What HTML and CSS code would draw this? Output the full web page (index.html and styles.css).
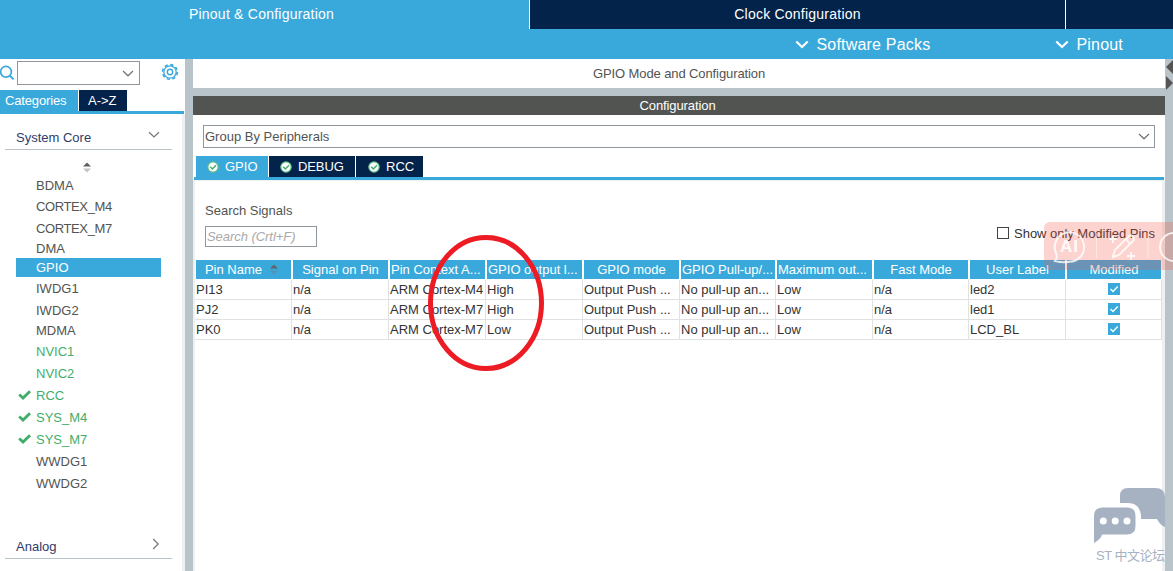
FILE: index.html
```html
<!DOCTYPE html>
<html lang="en">
<head>
    <meta charset="UTF-8">
    <meta name="viewport" content="width=device-width, initial-scale=1.0">
    <title>Pinout &amp; Configuration</title>
    <link rel="stylesheet" href="styles.css">
</head>
<body>
    <header>
        <div class="main-tabs">
            <div class="main-tab active">Pinout &amp; Configuration</div>
            <div class="main-tab clock">Clock Configuration</div>
            <div class="main-tab rest"></div>
        </div>
        <div class="sub-menu">
            <div class="menu-item packs">
                <svg width="14" height="9" viewBox="0 0 14 9"><path d="M1.3 1.5 L7 7 L12.7 1.5" fill="none" stroke="#fff" stroke-width="2.2"/></svg>
                <span>Software Packs</span>
            </div>
            <div class="menu-item">
                <svg width="14" height="9" viewBox="0 0 14 9"><path d="M1.3 1.5 L7 7 L12.7 1.5" fill="none" stroke="#fff" stroke-width="2.2"/></svg>
                <span>Pinout</span>
            </div>
        </div>
    </header>

    <div class="content">
        <!-- Categories -->
        <aside class="sidebar">
            <div class="search-row">
                <svg class="search-icon" width="15" height="16" viewBox="0 0 15 16"><circle cx="6" cy="6.8" r="5.4" fill="none" stroke="#39a9dc" stroke-width="1.7"/><path d="M9.8 10.6 L13.6 14.4" stroke="#39a9dc" stroke-width="2"/></svg>
                <div class="combo">
                    <svg width="12" height="7" viewBox="0 0 12 7"><path d="M1 1 L6 5.8 L11 1" fill="none" stroke="#6e7478" stroke-width="1.2"/></svg>
                </div>
                <svg class="gear" width="18" height="18" viewBox="0 0 18 18" fill="none" stroke="#39a9dc">
                    <circle cx="9" cy="9" r="7.4" stroke-width="1.6" stroke-dasharray="3.3 2.512"/>
                    <circle cx="9" cy="9" r="6.2" stroke-width="1.3"/>
                    <circle cx="9" cy="9" r="2.7" stroke-width="1.4"/>
                </svg>
            </div>
            <div class="side-tabs">
                <div class="side-tab active">Categories</div>
                <div class="side-tab az">A-&gt;Z</div>
            </div>
            <div class="side-panel">
                <div class="group">
                    <span>System Core</span>
                    <svg width="12" height="8" viewBox="0 0 12 8"><path d="M1 1.2 L6 6 L11 1.2" fill="none" stroke="#777" stroke-width="1.2"/></svg>
                </div>
                <svg class="sort" width="10" height="11" viewBox="0 0 10 11"><path d="M1 4.5 L5 .5 L9 4.5Z" fill="#5f5f5f"/><path d="M1 6.5 L5 10.5 L9 6.5Z" fill="#c4c4c4"/></svg>
                <ul class="list">
                    <li>BDMA</li>
                    <li class="mid tight">CORTEX_M4</li>
                    <li class="tight">CORTEX_M7</li>
                    <li class="short">DMA</li>
                    <li class="short selected">GPIO</li>
                    <li>IWDG1</li>
                    <li>IWDG2</li>
                    <li class="short">MDMA</li>
                    <li class="green">NVIC1</li>
                    <li class="green">NVIC2</li>
                    <li class="green checked"><svg width="13" height="10" viewBox="0 0 13 10"><path d="M1.2 4.5 L5 8 L12 1.2" fill="none" stroke="#3fae6a" stroke-width="2.8"/></svg>RCC</li>
                    <li class="green checked"><svg width="13" height="10" viewBox="0 0 13 10"><path d="M1.2 4.5 L5 8 L12 1.2" fill="none" stroke="#3fae6a" stroke-width="2.8"/></svg>SYS_M4</li>
                    <li class="green checked"><svg width="13" height="10" viewBox="0 0 13 10"><path d="M1.2 4.5 L5 8 L12 1.2" fill="none" stroke="#3fae6a" stroke-width="2.8"/></svg>SYS_M7</li>
                    <li>WWDG1</li>
                    <li>WWDG2</li>
                </ul>
                <div class="group analog">
                    <span>Analog</span>
                    <svg width="8" height="12" viewBox="0 0 8 12"><path d="M1.2 1 L6.2 6 L1.2 11" fill="none" stroke="#777" stroke-width="1.2"/></svg>
                </div>
            </div>
        </aside>

        <!-- Mode and configuration -->
        <main>
            <div class="title">GPIO Mode and Configuration</div>
            <div class="config-bar">Configuration</div>
            <div class="config">
                <div class="group-by">
                    <span>Group By Peripherals</span>
                    <svg width="12" height="7" viewBox="0 0 12 7"><path d="M1 1 L6 5.8 L11 1" fill="none" stroke="#6e7478" stroke-width="1.2"/></svg>
                </div>
                <div class="tabs">
                    <div class="tab active"><svg width="12" height="12" viewBox="0 0 12 12"><circle cx="6" cy="6" r="5.2" fill="#fff" stroke="#5dbb83" stroke-width="1.2"/><path d="M3.2 5.8 L5.4 8 L9 4.2" fill="none" stroke="#3fae6a" stroke-width="1.4"/></svg>GPIO</div>
                    <div class="tab debug"><svg width="12" height="12" viewBox="0 0 12 12"><circle cx="6" cy="6" r="5.2" fill="#fff" stroke="#5dbb83" stroke-width="1.2"/><path d="M3.2 5.8 L5.4 8 L9 4.2" fill="none" stroke="#3fae6a" stroke-width="1.4"/></svg>DEBUG</div>
                    <div class="tab rcc"><svg width="12" height="12" viewBox="0 0 12 12"><circle cx="6" cy="6" r="5.2" fill="#fff" stroke="#5dbb83" stroke-width="1.2"/><path d="M3.2 5.8 L5.4 8 L9 4.2" fill="none" stroke="#3fae6a" stroke-width="1.4"/></svg>RCC</div>
                </div>
                <div class="tab-body">
                    <div class="search-label">Search Signals</div>
                    <div class="filter">
                        <div class="search-box">Search (Crtl+F)</div>
                        <div class="only-modified"><span class="box"></span>Show only Modified Pins</div>
                    </div>
                    <table>
                        <colgroup>
                            <col class="w97"><col class="w97"><col class="w97"><col class="w97"><col class="w97">
                            <col class="w96"><col class="w97"><col class="w96"><col class="w97"><col class="w96">
                        </colgroup>
                        <thead>
                            <tr>
                                <th><div class="sorted">Pin Name <svg width="10" height="11" viewBox="0 0 10 11"><path d="M1 4.5 L5 .5 L9 4.5Z" fill="#5f6468"/><path d="M1 6.5 L5 10.5 L9 6.5Z" fill="#5591b4"/></svg></div></th>
                                <th><div>Signal on Pin</div></th>
                                <th><div class="left">Pin Context A...</div></th>
                                <th><div class="left">GPIO output l...</div></th>
                                <th><div>GPIO mode</div></th>
                                <th><div class="left">GPIO Pull-up/...</div></th>
                                <th><div class="left">Maximum out...</div></th>
                                <th><div>Fast Mode</div></th>
                                <th><div>User Label</div></th>
                                <th><div>Modified</div></th>
                            </tr>
                        </thead>
                        <tbody id="pins"></tbody>
                    </table>
                </div>
                <!-- forum watermark -->
                <div class="watermark">
                    <svg width="71" height="56" viewBox="0 0 71 56" fill="#a6b2c2">
                        <path d="M26 15 V8 Q26 0 34 0 H61 Q71 0 71 9 V39 Q65 36 63 31 H47 V28 Q46 15 34 15 Z"/>
                        <path d="M9 19.500 H33 Q41.500 19.500 41.500 28 V38 Q41.500 46.500 33 46.500 H8 Q7 51 0 55 V28 Q0 19.500 9 19.500Z"/>
                        <g fill="#fff"><circle cx="9.300" cy="33" r="3.500"/><circle cx="21.200" cy="33" r="3.500"/><circle cx="33" cy="33" r="3.500"/></g>
                    </svg>
                    <span>ST 中文论坛</span>
                </div>
            </div>
        </main>

        <div class="rail">
            <svg width="8" height="32" viewBox="0 0 8 32" fill="#555"><path d="M8 1 V15 L1 8Z"/><path d="M1 17 V31 L8 24Z"/></svg>
        </div>
    </div>

    <!-- floating AI toolbar -->
    <div class="ai-bar">
        <svg width="129" height="48" viewBox="0 0 129 48" fill="none" stroke="#fff" stroke-opacity=".8" stroke-width="2">
            <path d="M12.500 32 A14.700 14.700 0 1 1 25 39.700 Q19 41 11 39 Q13.500 36 12.500 32"/>
            <path d="M52.500 11 V36 M104 11 V36" stroke-width="1" stroke-opacity=".5"/>
            <path d="M69 34 L71 28 L85 14 Q87 12.500 89 14.500 Q91 17 89 19 L75 33 L69 35Z M82 17 L86 22"/>
            <path d="M69 13 V21 M65 17 H73 M87 30 V38 M83 34 H91"/>
            <circle cx="130" cy="25" r="14"/>
        </svg>
        <span>AI</span>
    </div>
    <svg class="marker" width="120" height="140" viewBox="0 0 120 140"><ellipse cx="60" cy="69" rx="55.500" ry="65.500" fill="none" stroke="#ed1c24" stroke-width="5"/></svg>

    <script>
        const pins = [
            { name: 'PI13', context: 'ARM Cortex-M4', level: 'High', label: 'led2' },
            { name: 'PJ2', context: 'ARM Cortex-M7', level: 'High', label: 'led1' },
            { name: 'PK0', context: 'ARM Cortex-M7', level: 'Low', label: 'LCD_BL' }
        ];

        document.getElementById('pins').innerHTML = pins.map(pin => `
            <tr>
                <td>${pin.name}</td>
                <td>n/a</td>
                <td>${pin.context}</td>
                <td>${pin.level}</td>
                <td>Output Push ...</td>
                <td>No pull-up an...</td>
                <td>Low</td>
                <td>n/a</td>
                <td>${pin.label}</td>
                <td class="check"><svg width="12" height="12" viewBox="0 0 12 12"><rect width="12" height="12" fill="#39a9dc"/><path d="M2.5 6 L5 8.500 L9.700 3.500" fill="none" stroke="#fff" stroke-width="1.3"/></svg></td>
            </tr>
        `).join('');
    </script>
</body>
</html>
```
FILE: styles.css
```css
* {
    box-sizing: border-box;
}
body {
    font-family: "Liberation Sans", Arial, sans-serif;
    font-size: 13px;
    margin: 0;
    height: 571px;
    overflow: hidden;
    position: relative;
    background: #fff;
    color: #525452;
}
svg {
    display: block;
    flex: none;
}
header {
    height: 59px;
    background: #39a9dc;
    color: #fff;
}
.main-tabs {
    display: flex;
    height: 29px;
    font-size: 14px;
    line-height: 28px;
    letter-spacing: 0.23px;
    text-align: center;
}
.main-tab.active {
    width: 529px;
    padding-right: 6px;
}
.main-tab.clock {
    width: 536px;
    background: #03234b;
    border-left: 1px solid #fff;
}
.main-tab.rest {
    flex: 1;
    background: #03234b;
    border-left: 1px solid #fff;
}
.sub-menu {
    display: flex;
    justify-content: flex-end;
    height: 30px;
    padding: 1px 50px 0 0;
    font-size: 16px;
    letter-spacing: 0.2px;
}
.menu-item {
    display: flex;
    align-items: center;
    gap: 7px;
}
.menu-item.packs {
    margin-right: 125px;
}
.content {
    display: flex;
    height: 512px;
}

/* sidebar */
.sidebar {
    width: 185px;
}
.search-row {
    display: flex;
    height: 31px;
    padding-top: 2px;
}
.search-icon {
    margin-top: 4px;
}
.combo {
    display: flex;
    align-items: center;
    justify-content: flex-end;
    width: 123px;
    height: 24px;
    margin-left: 2px;
    padding-right: 5px;
    border: 1px solid #8f979c;
}
.gear {
    margin: 2px 0 0 21px;
}
.side-tabs {
    display: flex;
    gap: 1px;
    width: 184px;
    height: 24px;
    border-bottom: 3px solid #39a9dc;
    color: #fff;
    line-height: 21px;
}
.side-tab.active {
    width: 78px;
    padding-left: 5px;
    background: #39a9dc;
    letter-spacing: -0.15px;
}
.side-tab.az {
    width: 48px;
    padding-left: 9px;
    background: #03234b;
}
.side-panel {
    height: 457px;
    padding-left: 5px;
    border-right: 3px solid #eef0f1;
}
.group {
    display: flex;
    justify-content: space-between;
    align-items: center;
    width: 167px;
    height: 36px;
    padding: 12px 12px 0 11px;
    border-bottom: 1px solid #b8c4ca;
    color: #2f3b6b;
}
.group svg {
    margin-top: -5px;
}
.sort {
    margin: 12px 0 0 77px;
}
.list {
    list-style: none;
    margin: 1px 0 0 11px;
    padding: 0;
    width: 145px;
}
.list li {
    height: 22px;
    line-height: 24px;
    padding-left: 20px;
}
.list .mid {
    height: 21px;
    line-height: 21px;
}
.list .short {
    height: 19px;
    line-height: 19px;
}
.list .tight {
    letter-spacing: -0.38px;
}
.list .selected {
    background: #39a9dc;
    color: #fff;
}
.list .green {
    color: #3fae6a;
}
.list .checked {
    display: flex;
    align-items: flex-start;
    gap: 5px;
    padding-left: 2px;
}
.checked svg {
    margin-top: 6px;
}
.group.analog {
    margin-top: 29px;
}

/* configuration */
main {
    width: 980px;
    border-left: 8px solid #b8c4ca;
}
.title {
    height: 29px;
    line-height: 29px;
    text-align: center;
    letter-spacing: -0.1px;
}
.config-bar {
    height: 27px;
    line-height: 19px;
    border-top: 8px solid #b8c4ca;
    background: #525452;
    color: #fff;
    text-align: center;
    padding-right: 3px;
    letter-spacing: -0.1px;
}
.config {
    position: relative;
    height: 456px;
    padding-top: 10px;
}
.group-by {
    display: flex;
    align-items: center;
    justify-content: space-between;
    height: 23px;
    margin: 0 10px;
    padding: 0 4px 0 1px;
    border: 1px solid #8f979c;
}
.tabs {
    display: flex;
    gap: 1px;
    height: 24px;
    margin: 8px 1px 0;
    padding-left: 2px;
    border-bottom: 3px solid #39a9dc;
    color: #fff;
}
.tab {
    display: flex;
    align-items: center;
    gap: 6px;
    background: #03234b;
    padding-left: 11px;
}
.tab.active {
    width: 72px;
    background: #39a9dc;
}
.tab.debug {
    width: 86px;
    letter-spacing: -0.1px;
}
.tab.rcc {
    width: 67px;
    padding-left: 12px;
}
.tab-body {
    height: 391px;
    border: solid #eef0f1;
    border-width: 1px 3px 0 2px;
}
.search-label {
    padding: 22px 0 0 10px;
    line-height: 15px;
}
.filter {
    display: flex;
    justify-content: space-between;
    height: 42px;
    padding: 8px 7px 0 10px;
}
.search-box {
    width: 112px;
    height: 21px;
    padding-left: 1px;
    border: 1px solid #8f979c;
    color: #a9a9a9;
    font-style: italic;
    line-height: 19px;
    letter-spacing: -0.05px;
}
.only-modified {
    display: flex;
    height: 14px;
    align-items: center;
    gap: 5px;
    color: #333;
    letter-spacing: -0.03px;
}
.box {
    width: 12px;
    height: 12px;
    border: 1px solid #444;
}
table {
    width: 967px;
    table-layout: fixed;
    border-spacing: 0;
    color: #333;
}
.w97 {
    width: 97px;
}
.w96 {
    width: 96px;
}
th {
    padding: 0 1px 1px;
    font-weight: normal;
    color: #fff;
}
th div {
    display: flex;
    justify-content: center;
    align-items: center;
    height: 19px;
    background: #39a9dc;
    white-space: nowrap;
}
th .sorted {
    gap: 7px;
    padding-right: 3px;
}
th .left {
    justify-content: flex-start;
    padding-left: 1px;
}
td {
    height: 20px;
    padding: 0 0 0 1px;
    line-height: 19px;
    border-right: 1px solid #dfe1e3;
    border-bottom: 1px solid #dfe1e3;
    white-space: nowrap;
}
td.check svg {
    margin: 0 auto 1px;
}
.rail {
    width: 8px;
    background: #b8c4ca;
}

/* overlays */
.watermark {
    position: absolute;
    right: 0;
    bottom: 0;
    width: 71px;
    height: 83px;
    color: #a6b2c2;
}
.watermark span {
    display: block;
    margin: 4px 0 0 2px;
    font: 13px/16px "Liberation Sans", "Noto Sans CJK SC", sans-serif;
    letter-spacing: -0.5px;
    white-space: nowrap;
}
.ai-bar {
    position: absolute;
    left: 1044px;
    top: 222px;
    width: 129px;
    height: 48px;
    border-radius: 6px 0 0 6px;
    background: rgba(247, 86, 70, 0.26);
    overflow: hidden;
}
.ai-bar span {
    position: absolute;
    left: 16px;
    top: 15px;
    font: bold 17px/20px "Liberation Sans", Arial, sans-serif;
    letter-spacing: 1px;
    color: rgba(255, 255, 255, 0.9);
}
.marker {
    position: absolute;
    left: 426px;
    top: 234px;
}
```
